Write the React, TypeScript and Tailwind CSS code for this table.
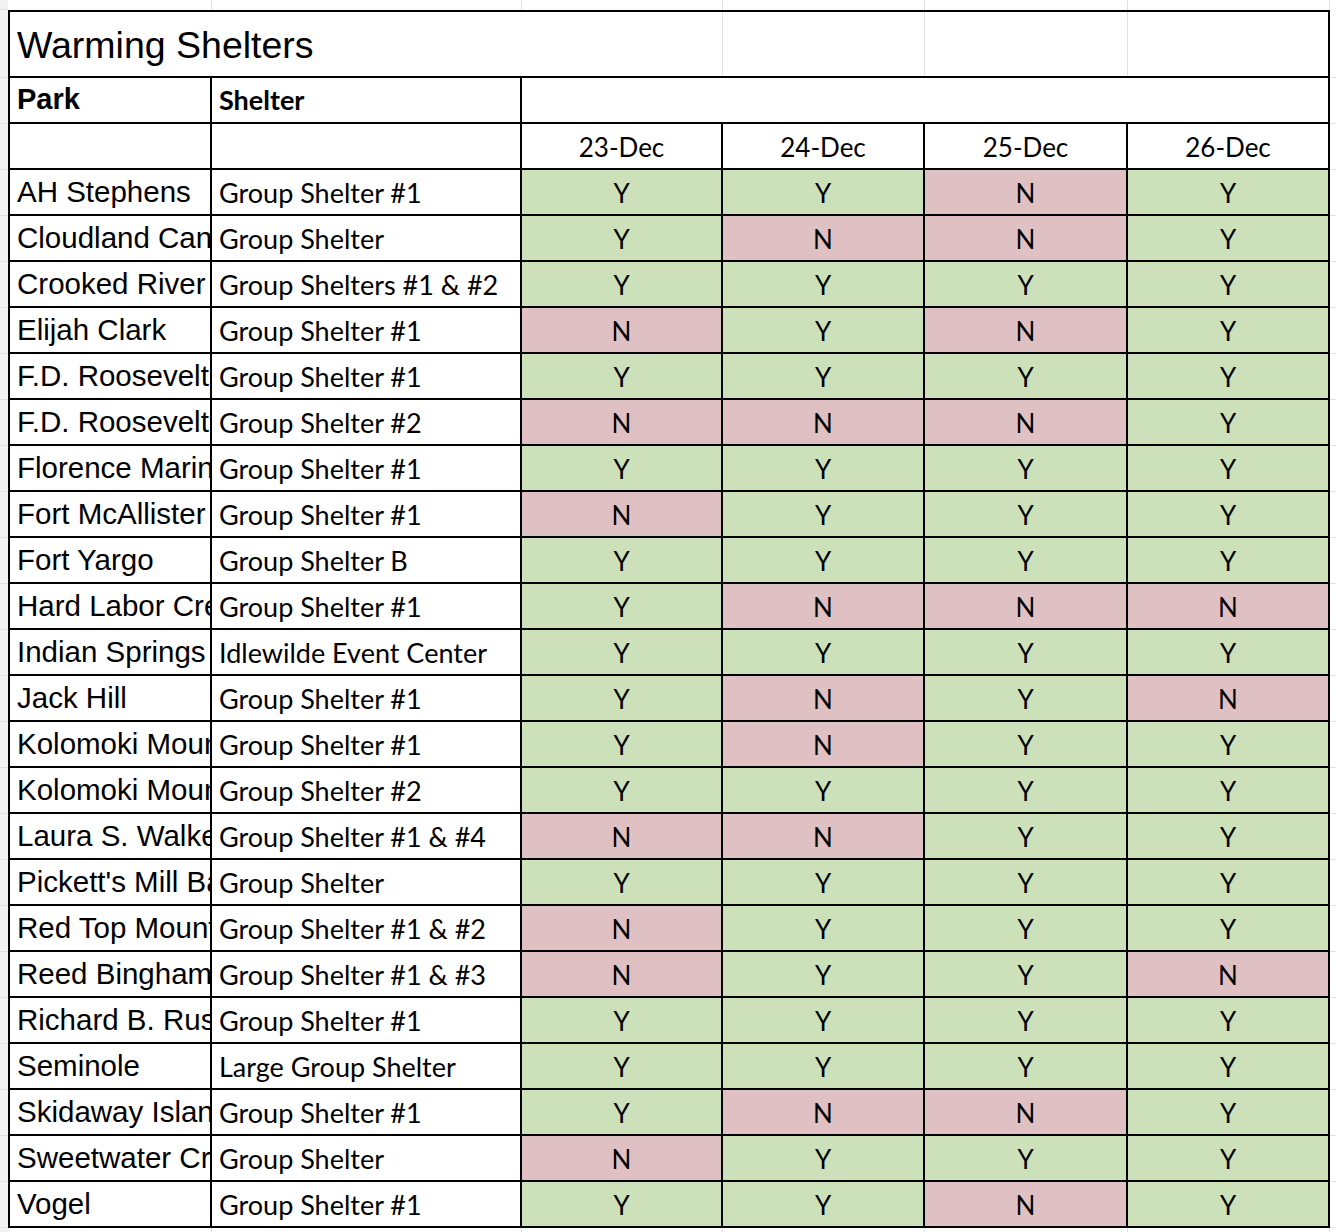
import React from 'react';

type Row = { park: string; shelter: string; days: string[] };

const rows: Row[] = [
  { park: 'AH Stephens', shelter: 'Group Shelter #1', days: ['Y', 'Y', 'N', 'Y'] },
  { park: 'Cloudland Canyon', shelter: 'Group Shelter', days: ['Y', 'N', 'N', 'Y'] },
  { park: 'Crooked River', shelter: 'Group Shelters #1 & #2', days: ['Y', 'Y', 'Y', 'Y'] },
  { park: 'Elijah Clark', shelter: 'Group Shelter #1', days: ['N', 'Y', 'N', 'Y'] },
  { park: 'F.D. Roosevelt', shelter: 'Group Shelter #1', days: ['Y', 'Y', 'Y', 'Y'] },
  { park: 'F.D. Roosevelt', shelter: 'Group Shelter #2', days: ['N', 'N', 'N', 'Y'] },
  { park: 'Florence Marina', shelter: 'Group Shelter #1', days: ['Y', 'Y', 'Y', 'Y'] },
  { park: 'Fort McAllister', shelter: 'Group Shelter #1', days: ['N', 'Y', 'Y', 'Y'] },
  { park: 'Fort Yargo', shelter: 'Group Shelter B', days: ['Y', 'Y', 'Y', 'Y'] },
  { park: 'Hard Labor Creek', shelter: 'Group Shelter #1', days: ['Y', 'N', 'N', 'N'] },
  { park: 'Indian Springs', shelter: 'Idlewilde Event Center', days: ['Y', 'Y', 'Y', 'Y'] },
  { park: 'Jack Hill', shelter: 'Group Shelter #1', days: ['Y', 'N', 'Y', 'N'] },
  { park: 'Kolomoki Mounds', shelter: 'Group Shelter #1', days: ['Y', 'N', 'Y', 'Y'] },
  { park: 'Kolomoki Mounds', shelter: 'Group Shelter #2', days: ['Y', 'Y', 'Y', 'Y'] },
  { park: 'Laura S. Walker', shelter: 'Group Shelter #1 & #4', days: ['N', 'N', 'Y', 'Y'] },
  { park: "Pickett's Mill Battlefield", shelter: 'Group Shelter', days: ['Y', 'Y', 'Y', 'Y'] },
  { park: 'Red Top Mountain', shelter: 'Group Shelter #1 & #2', days: ['N', 'Y', 'Y', 'Y'] },
  { park: 'Reed Bingham', shelter: 'Group Shelter #1 & #3', days: ['N', 'Y', 'Y', 'N'] },
  { park: 'Richard B. Russell', shelter: 'Group Shelter #1', days: ['Y', 'Y', 'Y', 'Y'] },
  { park: 'Seminole', shelter: 'Large Group Shelter', days: ['Y', 'Y', 'Y', 'Y'] },
  { park: 'Skidaway Island', shelter: 'Group Shelter #1', days: ['Y', 'N', 'N', 'Y'] },
  { park: 'Sweetwater Creek', shelter: 'Group Shelter', days: ['N', 'Y', 'Y', 'Y'] },
  { park: 'Vogel', shelter: 'Group Shelter #1', days: ['Y', 'Y', 'N', 'Y'] },
];

const dates = ['23-Dec', '24-Dec', '25-Dec', '26-Dec'];
const dayWidths = ['w-[201px]', 'w-[202px]', 'w-[203px]', 'w-[200px]'];

const arial = "font-['Liberation_Sans',Arial,sans-serif]";
const calibri = "font-['Lato','Noto_Sans',sans-serif]";

// 66px title row, 46px for the header, dates and every data row
const rowHeights = ['h-[66px]', ...Array(25).fill('h-[46px]')];

function GutterLines({ className }: { className: string }) {
  return (
    <div className={`flex flex-col ${className}`}>
      <div className="h-[2px]" />
      {rowHeights.map((h, i) => (
        <div key={i} className={`${h} border-b border-[#e2e2e2]`} />
      ))}
    </div>
  );
}

export default function App() {
  return (
    <div className="w-[1336px] h-[1232px] bg-white overflow-hidden flex flex-col text-black">
      {/* faint sheet grid above the table */}
      <div className="h-[10px] flex shrink-0">
        <div className="w-[8px] bg-[#f3f3f3] border-b border-[#e2e2e2]" />
        <div className="w-[204px] border-r border-[#e2e2e2]" />
        <div className="w-[310px] border-r border-[#e2e2e2]" />
        <div className="w-[201px] border-r border-[#e2e2e2]" />
        <div className="w-[202px] border-r border-[#e2e2e2]" />
        <div className="w-[203px] border-r border-[#e2e2e2]" />
        <div className="w-[202px] border-r border-[#e2e2e2]" />
      </div>

      <div className="flex shrink-0">
        <GutterLines className="w-[8px] bg-[#f3f3f3]" />

        <div className="w-[1322px] border-l-2 border-r-2 border-t-2 border-black">
          {/* title */}
          <div className="flex h-[66px] border-b-2 border-black">
            <div className={`w-[512px] flex items-center pl-[7px] pt-[2px] text-[37.5px] ${arial}`}>Warming Shelters</div>
            <div className="w-[201px] border-r border-[#e2e2e2]" />
            <div className="w-[202px] border-r border-[#e2e2e2]" />
            <div className="w-[203px] border-r border-[#e2e2e2]" />
            <div className="w-[200px]" />
          </div>

          {/* column headings */}
          <div className="flex h-[46px] border-b-2 border-black">
            <div className={`w-[202px] border-r-2 border-black flex items-center pl-[7px] text-[29px] font-bold ${arial}`}>Park</div>
            <div className={`w-[310px] border-r-2 border-black flex items-center pl-[7px] text-[27px] font-bold ${calibri}`}>Shelter</div>
            <div className="flex-1" />
          </div>

          {/* dates */}
          <div className="flex h-[46px] border-b-2 border-black">
            <div className="w-[202px] border-r-2 border-black" />
            <div className="w-[310px] border-r-2 border-black" />
            {dates.map((d, i) => (
              <div
                key={d}
                className={`${dayWidths[i]} ${i < 3 ? 'border-r-2 border-black' : ''} flex items-center justify-center pt-[2px] text-[26px] ${calibri}`}
              >
                {d}
              </div>
            ))}
          </div>

          {rows.map((row, r) => (
            <div key={r} className="flex h-[46px] border-b-2 border-black">
              <div className={`w-[202px] border-r-2 border-black flex items-center pl-[7px] pt-[1px] overflow-hidden whitespace-nowrap text-[29.5px] ${arial}`}>
                {row.park}
              </div>
              <div className={`w-[310px] border-r-2 border-black flex items-center pl-[7px] pt-[2px] overflow-hidden whitespace-nowrap text-[27px] ${calibri}`}>
                {row.shelter}
              </div>
              {row.days.map((v, i) => (
                <div
                  key={i}
                  className={`${dayWidths[i]} ${i < 3 ? 'border-r-2 border-black' : ''} ${v === 'Y' ? 'bg-[#cce0b9]' : 'bg-[#e0c1c3]'} flex items-center justify-center pt-[2px] text-[26px] ${calibri}`}
                >
                  {v}
                </div>
              ))}
            </div>
          ))}
        </div>

        <GutterLines className="flex-1" />
      </div>

      {/* faint sheet grid below the table */}
      <div className="flex-1 flex">
        <div className="w-[8px] bg-[#f3f3f3]" />
        <div className="w-[204px] border-r border-[#e2e2e2]" />
        <div className="w-[310px] border-r border-[#e2e2e2]" />
        <div className="w-[201px] border-r border-[#e2e2e2]" />
        <div className="w-[202px] border-r border-[#e2e2e2]" />
        <div className="w-[203px] border-r border-[#e2e2e2]" />
        <div className="w-[202px] border-r border-[#e2e2e2]" />
      </div>
    </div>
  );
}
